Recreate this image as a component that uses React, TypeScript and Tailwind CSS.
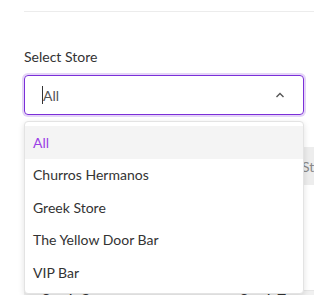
import React from "react";

const items = ["All", "Churros Hermanos", "Greek Store", "The Yellow Door Bar", "VIP Bar"];

export default function App() {
  return (
    <div className="relative w-[314px] h-[295px] overflow-hidden bg-white text-[14px] text-[#333]" style={{ fontFamily: "Lato, 'Open Sans', sans-serif" }}>
      <div className="pl-6">
        <div className="h-[11px]" />
        <div className="h-px bg-[#ececec]" />
        <div className="pt-[35px] pr-[10px]">
          <div className="leading-[20px] text-[#333]">Select Store</div>
          <div className="mt-[8px] h-[40px] rounded-[4px] border border-[#7b2fd8] ring-2 ring-[#e4d4f7] flex items-center pl-[17px] pr-[18px]">
            <span className="w-px h-[18px] bg-[#333]" />
            <span className="flex-1 text-[#555]">All</span>
            <svg width="10" height="6" viewBox="0 0 10 6" fill="none" stroke="#555" strokeWidth="1.4"><path d="M1.5 5 L5 1.5 L8.5 5" /></svg>
          </div>
        </div>
        <div className="mt-[32px] ml-[12px] h-[38px] bg-[#ededed] flex items-center pl-[266px] text-[#888] whitespace-nowrap">Stock Category</div>
        <div className="h-[105px]" />
        <div className="h-[30px] bg-[#f0f0f0] border-t border-[#e6e6e6] flex items-start pl-[18px] text-[#333] whitespace-nowrap leading-[14px] pt-[1px]">
          <span className="w-[143px] font-semibold">Stock Category</span>
          <span className="w-[55px] flex gap-[10px] text-[#c4c4c4] text-[9px] leading-[14px]"><span>▲</span><span>▼</span></span>
          <span className="font-semibold">Stock Type</span>
        </div>
      </div>
      <div className="absolute left-[24px] top-[121px] w-[280px] rounded-[4px] border border-[#e3e3e3] bg-white shadow-[0_2px_6px_rgba(0,0,0,0.12)] py-[4px]">
        {items.map((it, i) => (
          <div key={it} className={`h-[32.5px] flex items-center pl-[8px] ${i === 0 ? "bg-[#f4f4f4] text-[#9b3ee6]" : "text-[#333]"}`}>{it}</div>
        ))}
      </div>
    </div>
  );
}
